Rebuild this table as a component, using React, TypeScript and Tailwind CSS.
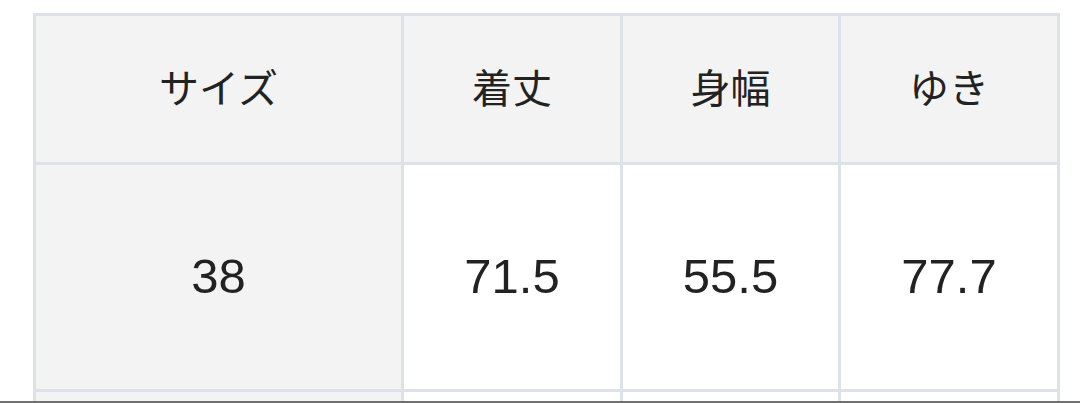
import React from 'react'

const headers = ['サイズ', '着丈', '身幅', 'ゆき']

const rows = [
  ['38', '71.5', '55.5', '77.7'],
  ['', '', '', ''],
]

function Cell({ children, head, first }: { children?: React.ReactNode; head?: boolean; first?: boolean }) {
  return (
    <div
      className={
        'flex items-center justify-center text-[#222] ' +
        (head || first ? 'bg-[#f3f3f3] ' : 'bg-white ') +
        (head ? 'h-[146px] text-[40px]' : 'h-[224px] text-[49px]')
      }
    >
      {children}
    </div>
  )
}

export default function App() {
  return (
    <div
      className="flex h-[403px] w-[1080px] flex-col overflow-hidden bg-white"
      style={{ fontFamily: '"Liberation Sans", "Noto Sans CJK JP", sans-serif' }}
    >
      <div className="flex-1 overflow-hidden pl-[33px] pt-[13px]">
        <div className="grid w-[1027px] grid-cols-[365px_216px_215px_216px] gap-[3px] bg-[#dde2e8] p-[3px]">
          {headers.map((h) => (
            <Cell key={h} head>
              {h}
            </Cell>
          ))}
          {rows.map((r, i) =>
            r.map((v, j) => (
              <Cell key={`${i}-${j}`} first={j === 0}>
                {v}
              </Cell>
            )),
          )}
        </div>
      </div>
      <div className="h-[2px] bg-[#707070]" />
    </div>
  )
}
